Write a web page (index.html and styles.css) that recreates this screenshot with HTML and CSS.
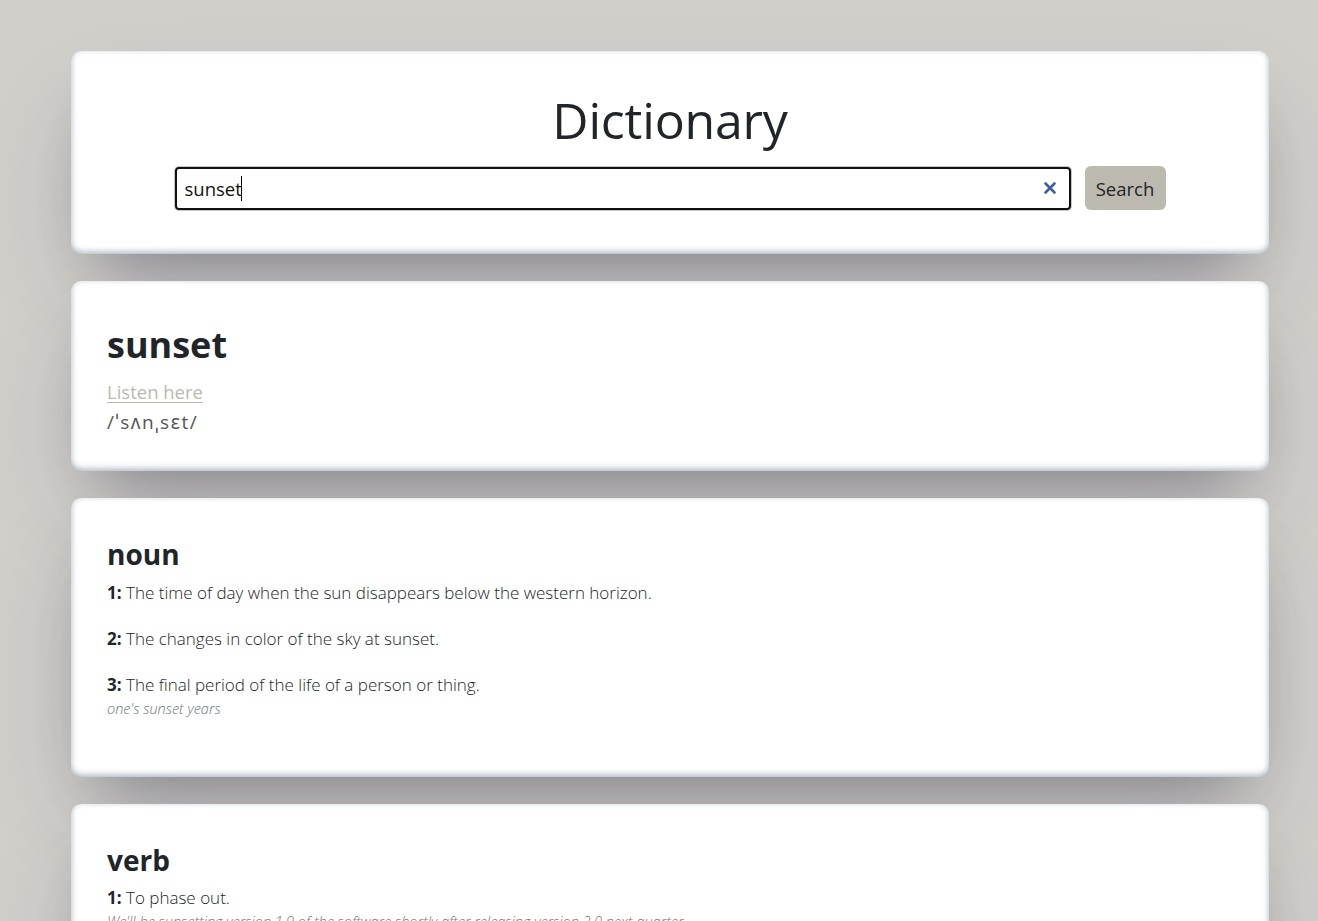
FILE: index.html
```html
<!DOCTYPE html>
<html lang="en">
<head>
<meta charset="utf-8">
<title>Dictionary</title>
<link rel="stylesheet" href="styles.css">
</head>
<body>
<main class="app">
  <section class="card header-card">
    <h1 class="title">Dictionary</h1>
    <form class="search-row">
      <div class="search-input">
        <span class="search-text">sunset</span><span class="caret"></span>
        <svg class="clear-icon" width="14" height="14" viewBox="0 0 14 14" aria-hidden="true">
          <path d="M2.5 2.5 L11.5 11.5 M11.5 2.5 L2.5 11.5" stroke="#3d5f98" stroke-width="2.6" stroke-linecap="round"/>
        </svg>
      </div>
      <button type="button" class="search-btn">Search</button>
    </form>
  </section>

  <section class="card word-card">
    <h2 class="word">sunset</h2>
    <a class="listen" href="#">Listen here</a>
    <div class="phonetic">/ˈsʌnˌsɛt/</div>
  </section>

  <section class="card meaning-card">
    <h3 class="pos">noun</h3>
    <div class="definition"><strong>1:</strong> The time of day when the sun disappears below the western horizon.</div>
    <div class="definition"><strong>2:</strong> The changes in color of the sky at sunset.</div>
    <div class="definition"><strong>3:</strong> The final period of the life of a person or thing.
      <div class="example">one's sunset years</div>
    </div>
  </section>

  <section class="card meaning-card">
    <h3 class="pos">verb</h3>
    <div class="definition"><strong>1:</strong> To phase out.
      <div class="example">We'll be sunsetting version 1.9 of the software shortly after releasing version 2.0 next quarter.</div>
    </div>
  </section>
</main>
</body>
</html>
```

FILE: styles.css
```css
* { box-sizing: border-box; }

html, body {
  margin: 0;
  padding: 0;
}

body {
  background: #d1cfca;
  font-family: "Open Sans", "Noto Sans", sans-serif;
  color: #212529;
  overflow: hidden;
  height: 921px;
}

.app {
  padding: 51px 49px 0 71px;
  display: flex;
  flex-direction: column;
  gap: 27px;
}

.card {
  background: #ffffff;
  border-radius: 10px;
  box-shadow: rgba(50, 50, 93, 0.25) 0px 50px 100px -20px,
              rgba(0, 0, 0, 0.3) 0px 30px 60px -30px,
              rgba(10, 37, 64, 0.35) 0px -2px 6px 0px inset;
  padding: 36px;
}

.header-card {
  padding: 39px 36px 44px;
  text-align: center;
}

.title {
  margin: 0 0 16px;
  font-size: 50px;
  font-weight: 500;
  line-height: 1.2;
  letter-spacing: -0.2px;
}

.search-row {
  display: flex;
  justify-content: center;
  align-items: center;
  gap: 14px;
  margin: 0;
}

.search-input {
  position: relative;
  width: 896px;
  height: 43px;
  border: 2px solid #111;
  border-radius: 4px;
  box-shadow: 0 0 0 1px #c9c7bf;
  display: flex;
  align-items: center;
  padding: 0 8px;
  text-align: left;
  font-size: 18.5px;
}

.search-text {
  color: #111;
}

.caret {
  display: inline-block;
  width: 1px;
  height: 25px;
  background: #000;
  margin-left: -1px;
}

.clear-icon {
  position: absolute;
  right: 12px;
  top: 50%;
  margin-top: -7px;
}

.search-btn {
  width: 81px;
  height: 44px;
  border: 0;
  border-radius: 6px;
  background: #bcb9ae;
  color: #212529;
  font-family: inherit;
  font-size: 18.5px;
  padding: 0;
}

.word-card {
  padding: 42px 36px 35px;
}

.word {
  margin: 0 0 12px;
  font-size: 36px;
  font-weight: 700;
  line-height: 1.2;
}

.listen {
  display: block;
  color: #bcb9ae;
  font-size: 18.5px;
  line-height: 1.5;
  text-decoration: underline;
  text-underline-offset: 3px;
}

.phonetic {
  margin-top: 2px;
  color: #555;
  font-size: 19px;
  line-height: 1.5;
  letter-spacing: 1.6px;
}

.meaning-card {
  padding: 40px 36px 37px;
}

.pos {
  margin: 0 0 8px;
  font-size: 28px;
  font-weight: 700;
  line-height: 1.2;
}

.definition {
  font-size: 17px;
  font-weight: 300;
  line-height: 1.5;
  margin-bottom: 20.5px;
}

.definition strong {
  font-weight: 700;
}

.example {
  font-size: 14.5px;
  font-style: italic;
  color: #6c757d;
  line-height: 1.5;
}
```
